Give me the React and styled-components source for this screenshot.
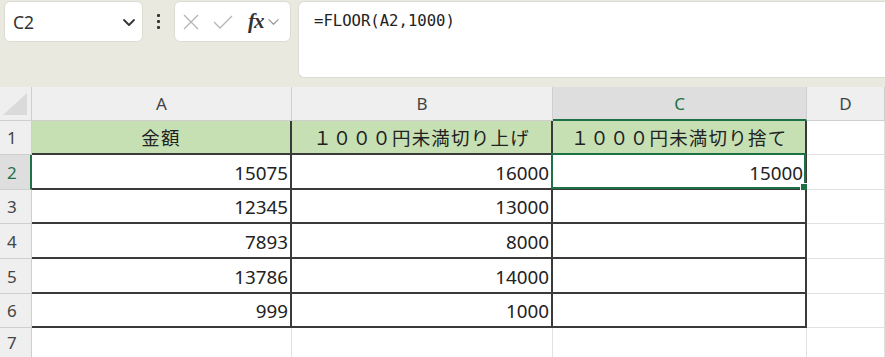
import React from "react";
import styled, { createGlobalStyle } from "styled-components";

const GREEN = "#1e7145";
const LINE = "#e1e1e1";
const INK = "#3a3a3a";

const GlobalStyle = createGlobalStyle`
  html, body {
    margin: 0;
    padding: 0;
    background: #ffffff;
    overflow: hidden;
  }
  body {
    font-family: "Noto Sans", "Noto Sans CJK JP", sans-serif;
  }
`;

const Page = styled.div`
  width: 885px;
  height: 357px;
  display: flex;
  flex-direction: column;
`;

const TopBar = styled.div`
  height: 87px;
  flex: none;
  background: #e9e9df;
  display: flex;
  align-items: flex-start;
  padding: 1px 0 0 4px;
  box-sizing: border-box;
`;

const Box = styled.div`
  background: #ffffff;
  border: 1px solid #dcdcd4;
  border-radius: 6px;
  box-sizing: border-box;
  height: ${(p) => p.$h || 41}px;
  width: ${(p) => (p.$w ? `${p.$w}px` : "auto")};
  flex: ${(p) => (p.$grow ? 1 : "none")};
  display: flex;
  align-items: ${(p) => (p.$grow ? "flex-start" : "center")};
`;

const NameText = styled.span`
  flex: 1;
  padding-left: 8px;
  font-family: "Noto Sans", sans-serif;
  font-size: 17.5px;
  color: #333;
`;

const Grip = styled.div`
  width: 31px;
  flex: none;
  height: 41px;
  display: flex;
  flex-direction: column;
  align-items: center;
  justify-content: center;
  gap: 3px;
  & > i {
    width: 3px;
    height: 3px;
    background: #333;
    border-radius: 1px;
  }
`;

const FxRow = styled.div`
  display: flex;
  align-items: center;
  padding-left: 7px;
`;

const FxLabel = styled.span`
  font-family: "Liberation Serif", serif;
  font-style: italic;
  font-weight: bold;
  font-size: 21px;
  color: #333;
  margin: 0 3px 0 14px;
  letter-spacing: -1px;
`;

const Formula = styled.div`
  padding: 10px 0 0 15px;
  font-family: "DejaVu Sans Mono", "Liberation Mono", monospace;
  font-size: 15.6px;
  color: #222;
`;

const Sheet = styled.div`
  flex: 1;
  display: grid;
  grid-template-columns: 32px 260px 261px 254px 1fr;
  grid-template-rows: 34px 34px 35px 34px 35px 35px 34px 1fr;
`;

const Cell = styled.div`
  position: relative;
  box-sizing: border-box;
  display: flex;
  align-items: center;
  justify-content: ${(p) => p.$justify || "center"};
  padding: ${(p) => p.$pad || "0"};
  background: ${(p) => p.$bg || "#ffffff"};
  color: ${(p) => p.$color || "#222"};
  border-right: ${(p) => p.$right || `1px solid ${LINE}`};
  border-bottom: ${(p) => p.$bottom || `1px solid ${LINE}`};
  font-family: ${(p) =>
    p.$jp ? `"Noto Sans CJK JP", sans-serif` : `"Noto Sans", sans-serif`};
  font-size: ${(p) => p.$size || 18}px;
  letter-spacing: ${(p) => p.$ls || 0}px;
  white-space: nowrap;
`;

const Corner = styled(Cell)`
  &::after {
    content: "";
    position: absolute;
    right: 4px;
    bottom: 5px;
    width: 0;
    height: 0;
    border-left: 24px solid transparent;
    border-bottom: 22px solid #dadada;
  }
`;

const Selection = styled.div`
  position: absolute;
  top: -2px;
  left: -2px;
  right: -1px;
  bottom: -1px;
  border: 2px solid ${GREEN};
  pointer-events: none;
`;

const Handle = styled.div`
  position: absolute;
  right: -5px;
  bottom: -5px;
  width: 7px;
  height: 7px;
  background: ${GREEN};
  border: 1px solid #fff;
`;

const Chevron = ({ size = 14, color = "#333", width = 1.8 }) => (
  <svg width={size} height={size} viewBox="0 0 14 14" fill="none">
    <path d="M2 5 L7 10 L12 5" stroke={color} strokeWidth={width} strokeLinecap="round" strokeLinejoin="round" />
  </svg>
);

const Cross = () => (
  <svg width="18" height="18" viewBox="0 0 18 18" fill="none">
    <path d="M2 2 L16 16 M16 2 L2 16" stroke="#b4b4b4" strokeWidth="1.3" />
  </svg>
);

const Check = () => (
  <svg width="22" height="18" viewBox="0 0 22 18" fill="none">
    <path d="M2 9 L8 15 L20 3" stroke="#b4b4b4" strokeWidth="1.3" />
  </svg>
);

const headBg = "#efefef";
const headSel = "#dedede";
const headBorder = "1px solid #cfcfcf";
const black = `2px solid ${INK}`;

const rows = [
  ["金額", "１０００円未満切り上げ", "１０００円未満切り捨て"],
  [15075, 16000, 15000],
  [12345, 13000, ""],
  [7893, 8000, ""],
  [13786, 14000, ""],
  [999, 1000, ""],
];

export default function App() {
  return (
    <Page>
      <GlobalStyle />
      <TopBar>
        <Box $w={139}>
          <NameText>C2</NameText>
          <span style={{ marginRight: 6, display: "flex" }}>
            <Chevron />
          </span>
        </Box>
        <Grip>
          <i />
          <i />
          <i />
        </Grip>
        <Box $w={117}>
          <FxRow>
            <Cross />
            <span style={{ width: 12 }} />
            <Check />
            <FxLabel>fx</FxLabel>
            <Chevron size={13} color="#9a9a9a" width={1.3} />
          </FxRow>
        </Box>
        <span style={{ width: 7, flex: "none" }} />
        <Box $grow $h={77} style={{ borderRight: "none", borderTopRightRadius: 0, borderBottomRightRadius: 0 }}>
          <Formula>=FLOOR(A2,1000)</Formula>
        </Box>
      </TopBar>

      <Sheet>
        <Corner $bg={headBg} $right={headBorder} $bottom={headBorder} />
        {["A", "B", "C", "D"].map((c) => (
          <Cell
            key={c}
            $bg={c === "C" ? headSel : headBg}
            $color={c === "C" ? GREEN : "#444"}
            $right={headBorder}
            $bottom={c === "C" ? `2px solid ${GREEN}` : headBorder}
            $size={17}
          >
            {c}
          </Cell>
        ))}

        {rows.map((r, i) => {
          const n = i + 1;
          const selRow = n === 2;
          return (
            <React.Fragment key={n}>
              <Cell
                $justify="flex-start"
                $pad="0 0 0 7px"
                $bg={selRow ? headSel : headBg}
                $color={selRow ? GREEN : "#444"}
                $right={selRow ? `2px solid ${GREEN}` : headBorder}
                $bottom={headBorder}
                $size={17}
              >
                {n}
              </Cell>
              {r.map((v, j) => {
                const isHead = n === 1;
                return (
                  <Cell
                    key={j}
                    $jp={isHead}
                    $bg={isHead ? "#c6e0b4" : "#ffffff"}
                    $justify={isHead ? "center" : "flex-end"}
                    $pad={isHead ? "0" : "2px 2px 0 0"}
                    $size={isHead ? 18.5 : 18.8}
                    $ls={isHead ? 1.2 : 0}
                    $right={black}
                    $bottom={black}
                    $color="#222"
                  >
                    {v}
                    {n === 2 && j === 2 && (
                      <Selection>
                        <Handle />
                      </Selection>
                    )}
                  </Cell>
                );
              })}
              <Cell />
            </React.Fragment>
          );
        })}

        <Cell
          $justify="flex-start"
          $pad="0 0 0 7px"
          $bg={headBg}
          $color="#444"
          $right={headBorder}
          $bottom="none"
          $size={17}
        >
          7
        </Cell>
        <Cell $bottom="none" />
        <Cell $bottom="none" />
        <Cell $bottom="none" />
        <Cell $bottom="none" />
      </Sheet>
    </Page>
  );
}
